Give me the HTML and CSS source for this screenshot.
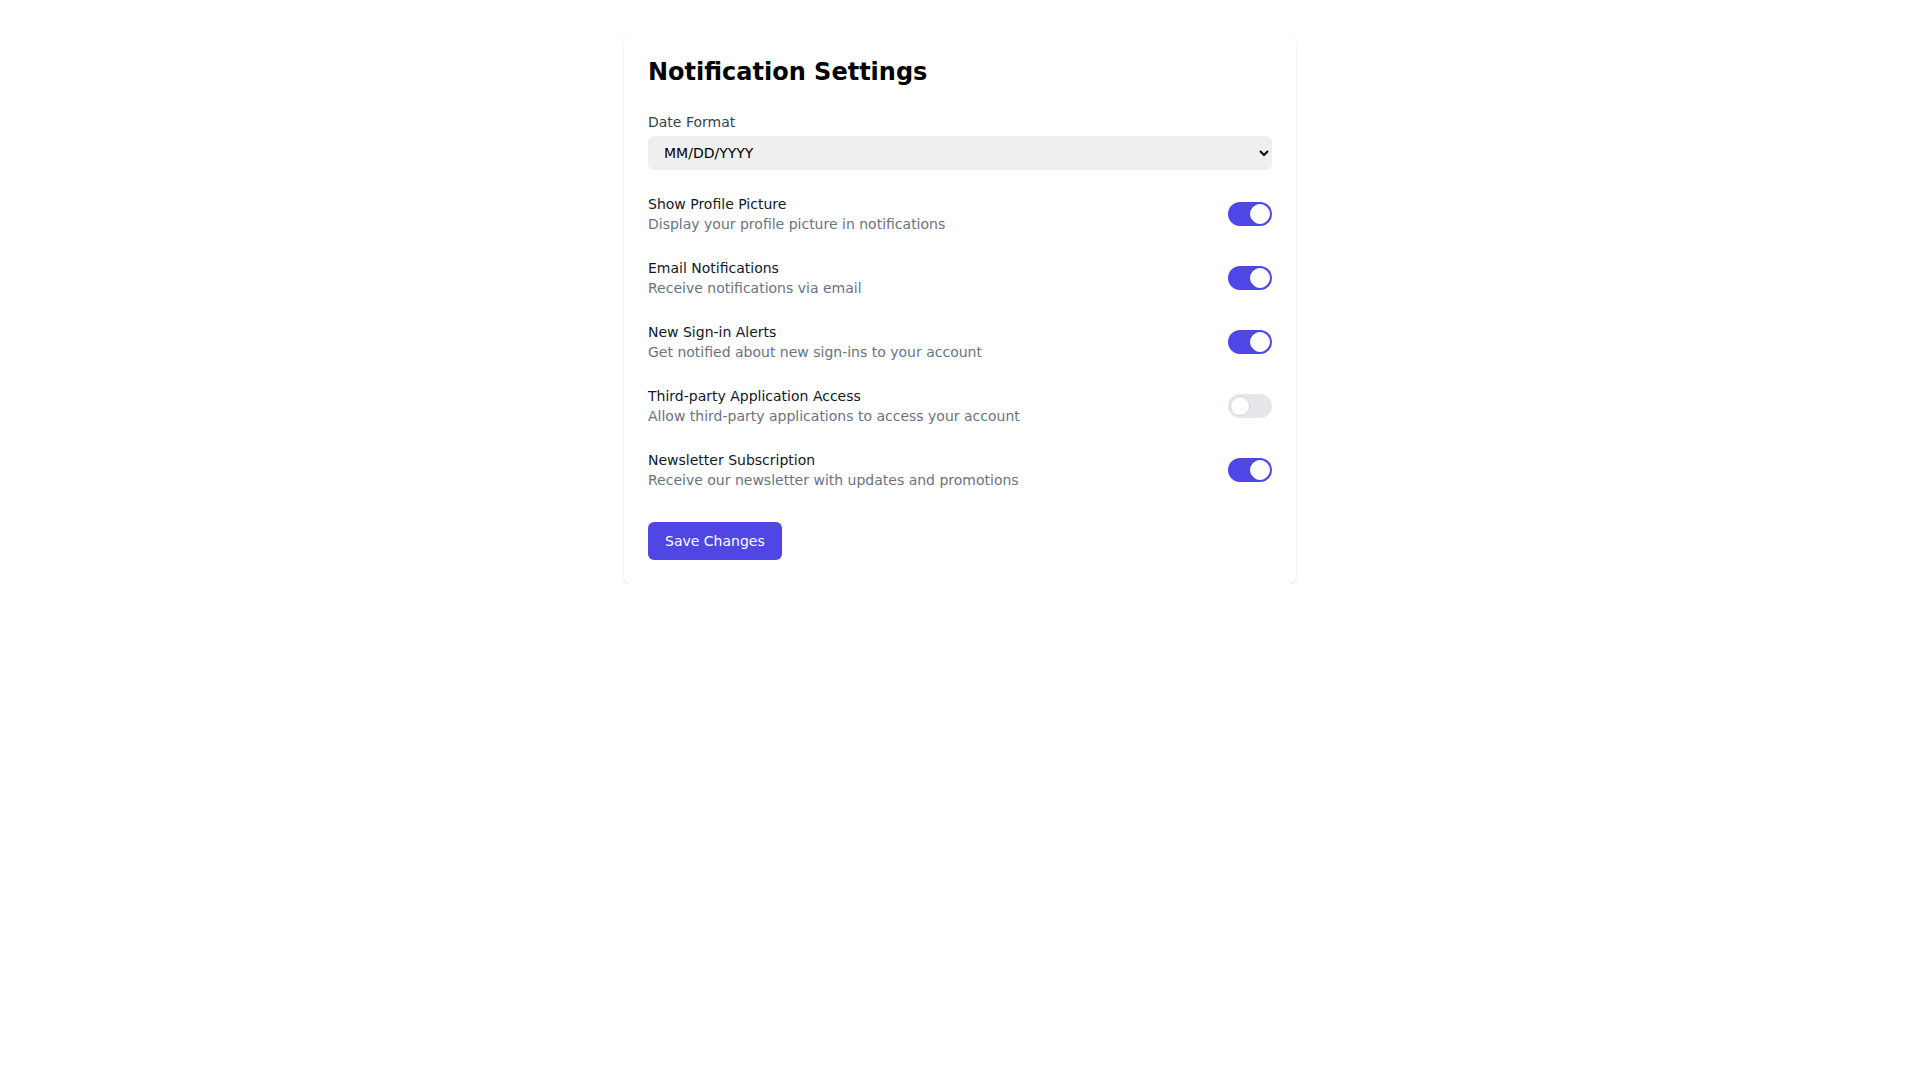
FILE: index.html
```html
<!DOCTYPE html>
<html lang="en">
<head>
<meta charset="utf-8">
<title>Notification Settings</title>
<link rel="stylesheet" href="styles.css">
</head>
<body>
<div class="card">
  <h1 class="title">Notification Settings</h1>
  <div class="field">
    <label class="label" for="df">Date Format</label>
    <select id="df" class="select">
      <option>MM/DD/YYYY</option>
      <option>DD/MM/YYYY</option>
      <option>YYYY-MM-DD</option>
    </select>
  </div>
  <div class="rows">
    <div class="row">
      <div class="text">
        <div class="name">Show Profile Picture</div>
        <div class="desc">Display your profile picture in notifications</div>
      </div>
      <span class="toggle on"><span class="knob"></span></span>
    </div>
    <div class="row">
      <div class="text">
        <div class="name">Email Notifications</div>
        <div class="desc">Receive notifications via email</div>
      </div>
      <span class="toggle on"><span class="knob"></span></span>
    </div>
    <div class="row">
      <div class="text">
        <div class="name">New Sign-in Alerts</div>
        <div class="desc">Get notified about new sign-ins to your account</div>
      </div>
      <span class="toggle on"><span class="knob"></span></span>
    </div>
    <div class="row">
      <div class="text">
        <div class="name">Third-party Application Access</div>
        <div class="desc">Allow third-party applications to access your account</div>
      </div>
      <span class="toggle"><span class="knob"></span></span>
    </div>
    <div class="row">
      <div class="text">
        <div class="name">Newsletter Subscription</div>
        <div class="desc">Receive our newsletter with updates and promotions</div>
      </div>
      <span class="toggle on"><span class="knob"></span></span>
    </div>
  </div>
  <button class="save">Save Changes</button>
</div>
</body>
</html>
```
FILE: styles.css
```css
html, body {
  margin: 0;
  padding: 0;
  background: #ffffff;
}
body {
  font-family: "DejaVu Sans", sans-serif;
  padding-top: 32px;
}
.card {
  width: 672px;
  box-sizing: border-box;
  margin: 0 auto;
  padding: 24px;
  background: #fff;
  border-radius: 8px;
  box-shadow: 0 1px 3px 0 rgba(0,0,0,0.1), 0 1px 2px -1px rgba(0,0,0,0.1);
}
.title {
  margin: 0 0 24px 0;
  font-size: 24px;
  line-height: 32px;
  font-weight: 700;
  color: #000;
}
.field {
  margin-bottom: 24px;
}
.label {
  display: block;
  font-size: 14px;
  line-height: 20px;
  color: #374151;
  margin-bottom: 4px;
}
.select {
  display: block;
  width: 100%;
  box-sizing: border-box;
  padding: 8px 12px;
  border: none;
  border-radius: 6px;
  background: #efefef;
  color: #000;
  font-family: "DejaVu Sans", sans-serif;
  font-size: 14px;
}
.rows {
  display: flex;
  flex-direction: column;
  gap: 24px;
}
.row {
  display: flex;
  align-items: center;
  justify-content: space-between;
}
.name {
  font-size: 14px;
  line-height: 20px;
  color: #111827;
}
.desc {
  font-size: 14px;
  line-height: 20px;
  color: #6b7280;
}
.toggle {
  position: relative;
  display: block;
  width: 44px;
  height: 24px;
  border-radius: 9999px;
  background: #e5e7eb;
  flex-shrink: 0;
}
.toggle.on {
  background: #4f46e5;
}
.knob {
  position: absolute;
  top: 2px;
  left: 2px;
  width: 20px;
  height: 20px;
  box-sizing: border-box;
  border-radius: 50%;
  background: #fff;
  border: 1px solid #d1d5db;
}
.toggle.on .knob {
  left: 22px;
  border-color: #fff;
}
.save {
  margin-top: 32px;
  padding: 8px 17px;
  border: none;
  border-radius: 6px;
  background: #4f46e5;
  color: #fff;
  font-family: "DejaVu Sans", sans-serif;
  font-size: 14px;
  line-height: 22px;
  cursor: pointer;
}
```
